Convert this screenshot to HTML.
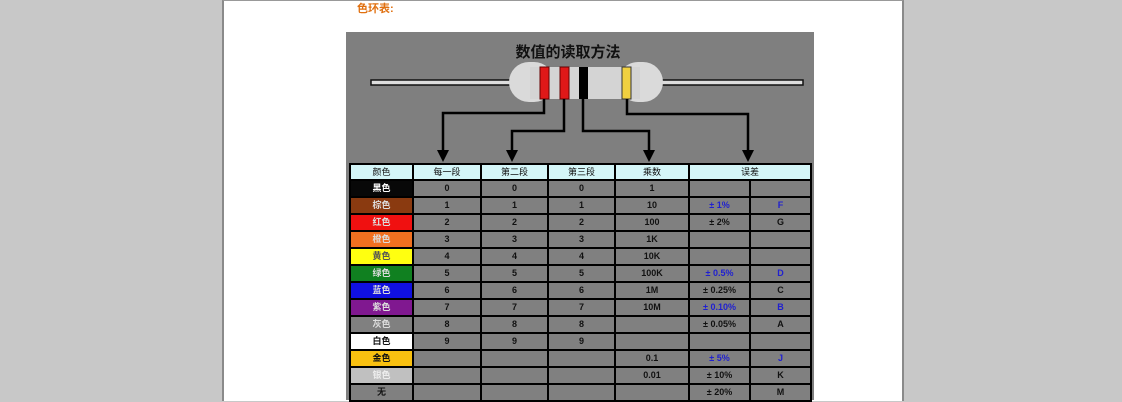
<!DOCTYPE html><html><head><meta charset="utf-8"><style>
body{margin:0;width:1122px;height:400px;background:#c8c8c8;position:relative;overflow:hidden;font-family:"Liberation Sans","Noto Sans CJK SC",sans-serif}
.page{position:absolute;left:222px;top:0;width:678px;height:400px;background:#fff;border-left:2px solid #8a8a8a;border-right:2px solid #8a8a8a;border-top:1px solid #999}
.ttl{position:absolute;left:357px;top:0;color:#e07010;font-size:11px;font-weight:bold}
.img{position:absolute;left:346px;top:32px;width:468px;height:368px;background:#7f7f7f}
table{position:absolute;left:349px;top:163px;border-collapse:collapse;font-size:9px;font-weight:bold}
td{border:2px solid #000;background:#808080;height:15px;padding:0;text-align:center;color:#111;line-height:13px}
tr.h td{background:#d4f6f8;font-weight:normal;height:14px}
.b{color:#2020d0}
</style></head><body>
<div class="page"></div>
<div class="ttl">色环表:</div>
<div class="img"></div>
<svg style="position:absolute;left:0;top:0" width="1122" height="400">
<text x="568" y="57" text-anchor="middle" font-size="15" font-weight="bold" font-family="Noto Sans CJK SC,sans-serif" fill="#111">数值的读取方法</text>
<rect x="371" y="80" width="432" height="5" fill="#ddd" stroke="#111" stroke-width="1.5"/>
<rect x="509" y="62" width="45" height="40" rx="20" fill="#dadada"/>
<rect x="618" y="62" width="45" height="40" rx="20" fill="#dadada"/>
<rect x="530" y="67" width="110" height="32" fill="#d4d4d4"/>
<rect x="540" y="67" width="9" height="32" fill="#e01818" stroke="#600" stroke-width="1"/>
<rect x="560" y="67" width="9" height="32" fill="#e01818" stroke="#600" stroke-width="1"/>
<rect x="579" y="67" width="9" height="32" fill="#000"/>
<rect x="622" y="67" width="9" height="32" fill="#f0d040" stroke="#333" stroke-width="1"/>
<g stroke="#000" stroke-width="2.5" fill="none">
<path d="M544 99V113H443V152"/><path d="M564 99V131H512V152"/><path d="M583 99V131H649V152"/><path d="M627 99V114H748V152"/>
</g>
<g fill="#000"><path d="M437 150h12l-6 12z"/><path d="M506 150h12l-6 12z"/><path d="M643 150h12l-6 12z"/><path d="M742 150h12l-6 12z"/></g>
</svg>
<table>
<tr class="h"><td style="width:61px">颜色</td><td style="width:66px">每一段</td><td style="width:65px">第二段</td><td style="width:65px">第三段</td><td style="width:72px">乘数</td><td colspan="2">误差</td></tr>
<tr><td style="background:#080808;color:#fff">黑色</td><td>0</td><td>0</td><td>0</td><td>1</td><td style="width:59px"></td><td style="width:59px"></td></tr>
<tr><td style="background:#8a3a10;color:#ddd">棕色</td><td>1</td><td>1</td><td>1</td><td>10</td><td class="b">± 1%</td><td class="b">F</td></tr>
<tr><td style="background:#f01010;color:#ddd">红色</td><td>2</td><td>2</td><td>2</td><td>100</td><td>± 2%</td><td>G</td></tr>
<tr><td style="background:#f07020;color:#ddd">橙色</td><td>3</td><td>3</td><td>3</td><td>1K</td><td></td><td></td></tr>
<tr><td style="background:#ffff10;color:#555">黄色</td><td>4</td><td>4</td><td>4</td><td>10K</td><td></td><td></td></tr>
<tr><td style="background:#108020;color:#ddd">绿色</td><td>5</td><td>5</td><td>5</td><td>100K</td><td class="b">± 0.5%</td><td class="b">D</td></tr>
<tr><td style="background:#1010e0;color:#ddd">蓝色</td><td>6</td><td>6</td><td>6</td><td>1M</td><td>± 0.25%</td><td>C</td></tr>
<tr><td style="background:#801890;color:#ddd">紫色</td><td>7</td><td>7</td><td>7</td><td>10M</td><td class="b">± 0.10%</td><td class="b">B</td></tr>
<tr><td style="background:#808080;color:#ddd">灰色</td><td>8</td><td>8</td><td>8</td><td></td><td>± 0.05%</td><td>A</td></tr>
<tr><td style="background:#fff;color:#111">白色</td><td>9</td><td>9</td><td>9</td><td></td><td></td><td></td></tr>
<tr><td style="background:#f8c010;color:#111">金色</td><td></td><td></td><td></td><td>0.1</td><td class="b">± 5%</td><td class="b">J</td></tr>
<tr><td style="background:#c0c0c0;color:#eee">银色</td><td></td><td></td><td></td><td>0.01</td><td>± 10%</td><td>K</td></tr>
<tr><td>无</td><td></td><td></td><td></td><td></td><td>± 20%</td><td>M</td></tr>
</table>
</body></html>
